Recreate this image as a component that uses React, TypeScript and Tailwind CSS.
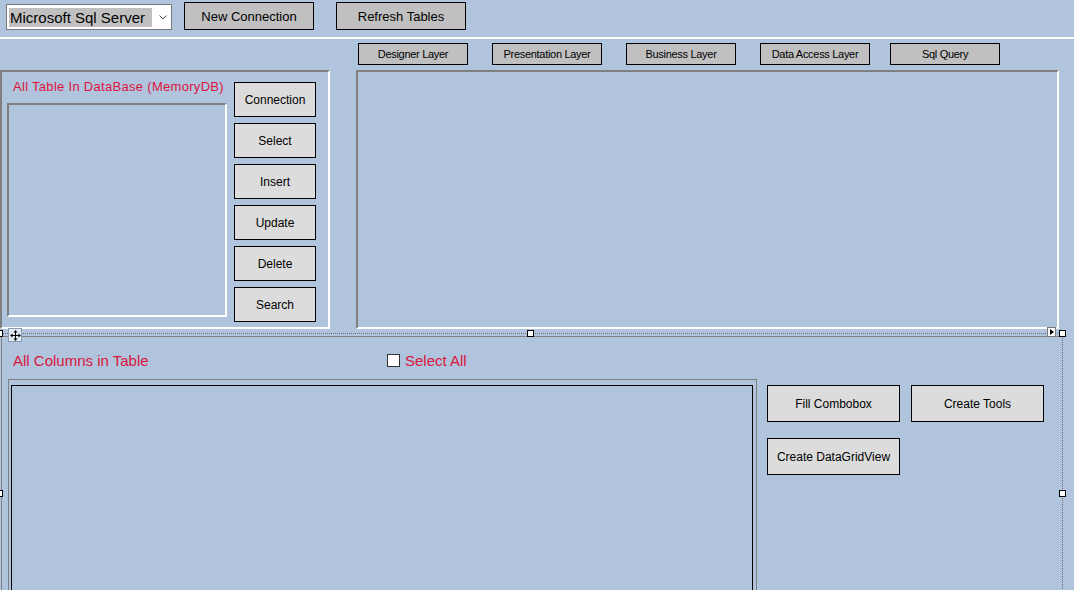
import React from "react";

const layerTabs = [
  { label: "Designer Layer", gap: "ml-0" },
  { label: "Presentation Layer", gap: "ml-[24px]" },
  { label: "Business Layer", gap: "ml-[24px]" },
  { label: "Data Access Layer", gap: "ml-[24px]" },
  { label: "Sql Query", gap: "ml-[20px]" },
];

const crudButtons = ["Connection", "Select", "Insert", "Update", "Delete", "Search"];

const Handle = ({ pos }: { pos: string }) => (
  <div className={`absolute w-[7px] h-[7px] bg-white border border-black ${pos}`} />
);

export default function App() {
  return (
    <div className="relative w-[1074px] h-[590px] overflow-hidden bg-[#b0c4de] font-['Liberation_Sans',Arial,sans-serif] text-black select-none">
      {/* toolbar */}
      <div className="flex items-start h-[37px]">
        <div className="ml-[6px] mt-[4px] w-[166px] h-[26px] bg-white border border-[#7a7a7a] flex items-center pl-[2px]">
          <span className="bg-[#c0c0c0] h-[19px] w-[143px] flex items-center pl-[1px] text-[15px] leading-none whitespace-nowrap">
            Microsoft Sql Server
          </span>
          <svg className="ml-[7px]" width="8" height="5" viewBox="0 0 8 5">
            <polyline points="0.5,0.5 4,4 7.5,0.5" fill="none" stroke="#555" strokeWidth="1" />
          </svg>
        </div>
        <button className="ml-[12px] mt-[2px] w-[130px] h-[28px] bg-[#c0c0c0] border border-black text-[13px] leading-none">
          New Connection
        </button>
        <button className="ml-[22px] mt-[2px] w-[130px] h-[28px] bg-[#c0c0c0] border border-black text-[13px] leading-none">
          Refresh Tables
        </button>
      </div>
      <div className="h-[2px] bg-white" />

      {/* layer tabs */}
      <div className="flex mt-[4px] h-[22px] pl-[358px]">
        {layerTabs.map((t) => (
          <button
            key={t.label}
            className={`${t.gap} w-[110px] h-[22px] bg-[#c0c0c0] border border-black text-[11px] tracking-[-0.3px] leading-none whitespace-nowrap`}
          >
            {t.label}
          </button>
        ))}
      </div>

      {/* top panels */}
      <div className="flex mt-[5px] h-[259px]">
        <div className="w-[330px] h-full border-2 border-t-[#808080] border-l-[#808080] border-r-white border-b-white flex">
          <div className="pl-[5px] pt-[7px] flex flex-col">
            <div className="ml-[6px] text-[13px] tracking-[0.3px] leading-[15px] text-[#dc143c] whitespace-nowrap">
              All Table In DataBase (MemoryDB)
            </div>
            <div className="mt-[9px] w-[220px] h-[214px] border-2 border-t-[#808080] border-l-[#808080] border-r-white border-b-white" />
          </div>
          <div className="ml-[7px] pt-[10px] flex flex-col gap-[6px]">
            {crudButtons.map((b) => (
              <button key={b} className="w-[82px] h-[35px] bg-[#dcdcdc] border border-black text-[12px] leading-none">
                {b}
              </button>
            ))}
          </div>
        </div>
        <div className="ml-[26px] w-[703px] h-full border-2 border-t-[#808080] border-l-[#808080] border-r-white border-b-white" />
      </div>

      {/* bottom panel */}
      <div className="mt-[7px] ml-[1px] w-[1058px] h-[300px] border-t border-l border-[#808080]">
        <div className="pt-[15px] pl-[11px] flex items-center h-[32px]">
          <div className="w-[374px] text-[15px] leading-[17px] text-[#dc143c] whitespace-nowrap">All Columns in Table</div>
          <div className="w-[13px] h-[13px] bg-white border border-[#333]" />
          <div className="ml-[5px] text-[15px] leading-[17px] text-[#dc143c] whitespace-nowrap">Select All</div>
        </div>
        <div className="mt-[10px] flex">
          <div className="ml-[6px] w-[749px] h-[240px] border border-[#808080] pt-[5px] pl-[2px] pr-[3px]">
            <div className="h-full border border-black" />
          </div>
          <div className="ml-[10px] mt-[6px] grid grid-cols-2 gap-x-[11px] gap-y-[16px] h-fit">
            <button className="w-[133px] h-[37px] bg-[#dcdcdc] border border-black text-[12px] leading-none">Fill Combobox</button>
            <button className="w-[133px] h-[37px] bg-[#dcdcdc] border border-black text-[12px] leading-none">Create Tools</button>
            <button className="w-[133px] h-[37px] bg-[#dcdcdc] border border-black text-[12px] leading-none">Create DataGridView</button>
          </div>
        </div>
      </div>

      {/* designer selection overlay */}
      <div className="absolute left-0 top-[333px] w-[1062px] border-t border-dotted border-[#6e6e6e]" />
      <div className="absolute left-[1062px] top-[333px] h-[260px] border-l border-dotted border-[#6e6e6e]" />
      <Handle pos="left-[-4px] top-[330px]" />
      <Handle pos="left-[527px] top-[330px]" />
      <Handle pos="left-[1059px] top-[330px]" />
      <Handle pos="left-[1059px] top-[490px]" />
      <Handle pos="left-[-4px] top-[490px]" />
      <div className="absolute left-[8px] top-[328px] w-[14px] h-[14px] bg-[#e4eaf2] border border-[#8a9ab0] flex items-center justify-center">
        <svg width="11" height="11" viewBox="0 0 11 11">
          <line x1="5.5" y1="2" x2="5.5" y2="9" stroke="#000" strokeWidth="1" />
          <line x1="2" y1="5.5" x2="9" y2="5.5" stroke="#000" strokeWidth="1" />
          <polygon points="5.5,0 3.5,2.5 7.5,2.5" fill="#000" />
          <polygon points="5.5,11 3.5,8.5 7.5,8.5" fill="#000" />
          <polygon points="0,5.5 2.5,3.5 2.5,7.5" fill="#000" />
          <polygon points="11,5.5 8.5,3.5 8.5,7.5" fill="#000" />
        </svg>
      </div>
      <div className="absolute left-[1047px] top-[327px] w-[9px] h-[10px] bg-white border border-[#777] flex items-center justify-center">
        <svg width="4" height="6" viewBox="0 0 4 6">
          <polygon points="0,0 4,3 0,6" fill="#000" />
        </svg>
      </div>
    </div>
  );
}
